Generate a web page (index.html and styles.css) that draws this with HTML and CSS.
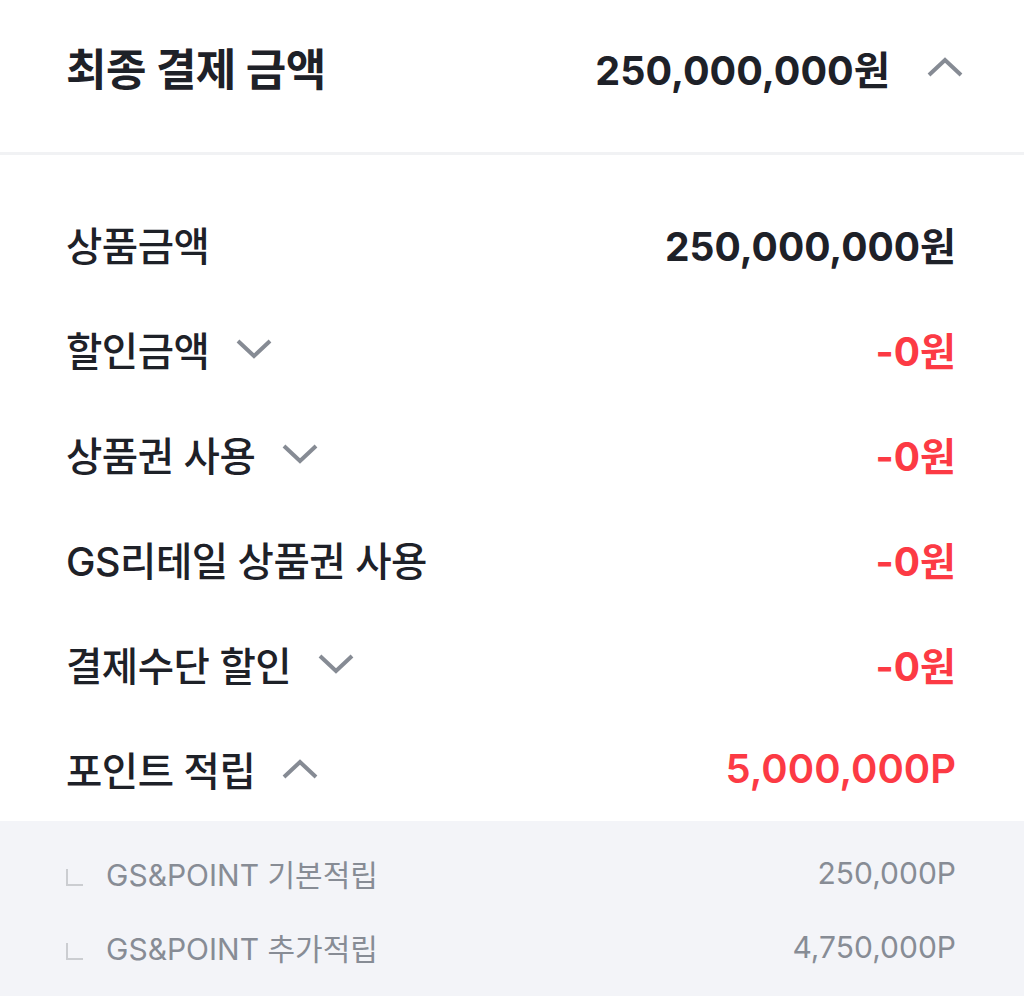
FILE: index.html
```html
<!DOCTYPE html>
<html lang="ko">
<head>
    <meta charset="utf-8">
    <title>최종 결제 금액</title>
    <link rel="stylesheet" href="styles.css">
</head>
<body>

<div class="summary">
    <div class="summary-head">
        <h1 class="summary-title">최종 결제 금액</h1>
        <div class="summary-total">
            <span>250,000,000원</span>
            <svg class="chevron" width="38" height="22" viewBox="0 0 38 22"><path d="M3 19 L19 4 L35 19" /></svg>
        </div>
    </div>

    <div class="rows">
        <div class="row">
            <span class="label">상품금액</span>
            <span class="amount">250,000,000원</span>
        </div>
        <div class="row">
            <span class="label">할인금액
                <svg class="chevron" width="38" height="22" viewBox="0 0 38 22"><path d="M3 3 L19 18 L35 3" /></svg>
            </span>
            <span class="amount minus">-0원</span>
        </div>
        <div class="row">
            <span class="label">상품권 사용
                <svg class="chevron" width="38" height="22" viewBox="0 0 38 22"><path d="M3 3 L19 18 L35 3" /></svg>
            </span>
            <span class="amount minus">-0원</span>
        </div>
        <div class="row">
            <span class="label">GS리테일 상품권 사용</span>
            <span class="amount minus">-0원</span>
        </div>
        <div class="row">
            <span class="label">결제수단 할인
                <svg class="chevron" width="38" height="22" viewBox="0 0 38 22"><path d="M3 3 L19 18 L35 3" /></svg>
            </span>
            <span class="amount minus">-0원</span>
        </div>
        <div class="row">
            <span class="label">포인트 적립
                <svg class="chevron" width="38" height="22" viewBox="0 0 38 22"><path d="M3 19 L19 4 L35 19" /></svg>
            </span>
            <span class="amount point">5,000,000P</span>
        </div>
    </div>

    <div class="sub-rows">
        <div class="sub-row">
            <span class="sub-label"><i class="branch"></i>GS&amp;POINT 기본적립</span>
            <span class="sub-amount">250,000P</span>
        </div>
        <div class="sub-row">
            <span class="sub-label"><i class="branch"></i>GS&amp;POINT 추가적립</span>
            <span class="sub-amount">4,750,000P</span>
        </div>
    </div>
</div>

</body>
</html>
```

FILE: styles.css
```css
body {
    margin: 0;
    padding: 0;
    background: #fff;
    font-family: "Inter", "Noto Sans CJK KR", sans-serif;
    color: #1e2128;
}

/* header */
.summary-head {
    height: 134px;
    display: flex;
    align-items: center;
    justify-content: space-between;
    padding: 0 60px 18px 66px;
    border-bottom: 3px solid #f1f2f4;
}

.summary-title {
    margin: 0;
    font-size: 44px;
    font-weight: 700;
    letter-spacing: -0.5px;
}

.summary-total {
    display: flex;
    align-items: center;
    gap: 36px;
    font-size: 39.5px;
    font-weight: 700;
}

.chevron {
    fill: none;
    stroke: #868b94;
    stroke-width: 4;
    stroke-linecap: butt;
    stroke-linejoin: miter;
}

/* rows */
.rows {
    padding: 36px 68px 0 66px;
}

.row {
    height: 105px;
    display: flex;
    align-items: center;
    justify-content: space-between;
}

.label {
    display: flex;
    align-items: center;
    gap: 26px;
    font-size: 39.5px;
    font-weight: 500;
    letter-spacing: -0.5px;
}

.amount {
    font-size: 39px;
    font-weight: 700;
}

.minus,
.point {
    color: #fc3a44;
}

.point {
    font-size: 40px;
    font-weight: 600;
}

/* point details */
.sub-rows {
    background: #f3f4f8;
    padding: 15px 68px 13px 66px;
}

.sub-row {
    height: 74px;
    display: flex;
    align-items: center;
    justify-content: space-between;
    color: #878c95;
    font-size: 30px;
}

.sub-label {
    display: flex;
    align-items: center;
}

.branch {
    width: 15px;
    height: 15px;
    border-left: 2px solid #cbcdd1;
    border-bottom: 2px solid #cbcdd1;
    margin: 8px 23px 0 0;
}
```
